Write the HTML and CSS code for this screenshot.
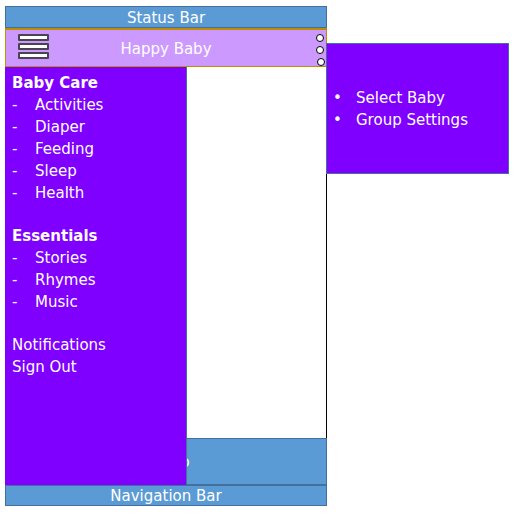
FILE: index.html
```html
<!DOCTYPE html>
<html lang="en">
<head>
    <meta charset="UTF-8">
    <title>Happy Baby</title>
    <link rel="stylesheet" href="styles.css">
</head>
<body>

    <div class="phone">
        <div class="status-bar">Status Bar</div>

        <div class="app-bar">
            <div class="hamburger">
                <span></span>
                <span></span>
                <span></span>
            </div>
            <div class="title">Happy Baby</div>
            <div class="more-dots">
                <span></span>
                <span></span>
                <span class="last"></span>
            </div>
        </div>

        <div class="content"></div>
        <div class="bottom-box">Promo</div>
        <div class="nav-bar">Navigation Bar</div>

        <!-- side drawer, opened over the content -->
        <div class="drawer">
            <div class="group">
                <div class="group-title">Baby Care</div>
                <div class="item"><span class="dash">-</span>Activities</div>
                <div class="item"><span class="dash">-</span>Diaper</div>
                <div class="item"><span class="dash">-</span>Feeding</div>
                <div class="item"><span class="dash">-</span>Sleep</div>
                <div class="item"><span class="dash">-</span>Health</div>
            </div>
            <div class="group">
                <div class="group-title">Essentials</div>
                <div class="item"><span class="dash">-</span>Stories</div>
                <div class="item"><span class="dash">-</span>Rhymes</div>
                <div class="item"><span class="dash">-</span>Music</div>
            </div>
            <div class="group">
                <div class="link">Notifications</div>
                <div class="link">Sign Out</div>
            </div>
        </div>

        <!-- overflow menu -->
        <ul class="popup-menu">
            <li>Select Baby</li>
            <li>Group Settings</li>
        </ul>
    </div>

</body>
</html>
```

FILE: styles.css
```css
body {
    margin: 0;
    padding: 0;
    background-color: #ffffff;
    font-family: 'DejaVu Sans', sans-serif;
    font-size: 15px;
    color: #ffffff;
}

.phone {
    position: relative;
    width: 322px;
    margin-top: 6px;
    margin-left: 5px;
}

.status-bar,
.nav-bar,
.bottom-box {
    box-sizing: border-box;
    background-color: #5b9bd5;
    border: 1px solid #41719c;
    text-align: center;
}

.status-bar {
    height: 22px;
    line-height: 22px;
}

.app-bar {
    box-sizing: border-box;
    height: 39px;
    background-color: #cc99ff;
    border: 1px solid #c08c00;
    border-top-width: 2px;
    display: flex;
    align-items: center;
    position: relative;
}

.hamburger {
    align-self: flex-start;
    display: flex;
    flex-direction: column;
    gap: 2px;
    margin-top: 4px;
    margin-left: 12px;
    width: 31px;
}

.hamburger span {
    box-sizing: border-box;
    display: block;
    height: 7px;
    background-color: #ffffff;
    border: 2px solid #4a4450;
    border-radius: 1px;
}

.title {
    flex: 1;
    text-align: center;
    margin-right: 43px;
    padding-top: 2px;
    line-height: 20px;
}

.more-dots {
    position: absolute;
    right: 1px;
    top: 4px;
    display: flex;
    flex-direction: column;
    gap: 4px;
}

.more-dots span {
    box-sizing: border-box;
    display: block;
    width: 8px;
    height: 8px;
    border: 1px solid #000000;
    border-radius: 50%;
    background-color: #ffffff;
}

.more-dots span.last {
    margin-left: 1px;
}

.content {
    box-sizing: border-box;
    height: 371px;
    background-color: #ffffff;
    border-right: 1px solid #000000;
}

.bottom-box {
    height: 47px;
    line-height: 47px;
}

.nav-bar {
    height: 21px;
    line-height: 21px;
}

.drawer {
    position: absolute;
    top: 61px;
    left: 0;
    box-sizing: border-box;
    width: 182px;
    height: 418px;
    background-color: #8000ff;
    border-right: 1px solid #41719c;
    padding: 5px 0 0 7px;
    line-height: 22px;
}

.group + .group {
    margin-top: 21px;
}

.group-title {
    font-weight: bold;
}

.item .dash {
    display: inline-block;
    width: 23px;
}

.popup-menu {
    position: absolute;
    top: 37px;
    left: 321px;
    box-sizing: border-box;
    width: 183px;
    height: 131px;
    margin: 0;
    padding: 0 0 0 6px;
    list-style: none;
    background-color: #8000ff;
    border: 1px solid #41719c;
    display: flex;
    flex-direction: column;
    justify-content: center;
    line-height: 22px;
}

.popup-menu li::before {
    content: '\2022';
    display: inline-block;
    width: 23px;
}
```
